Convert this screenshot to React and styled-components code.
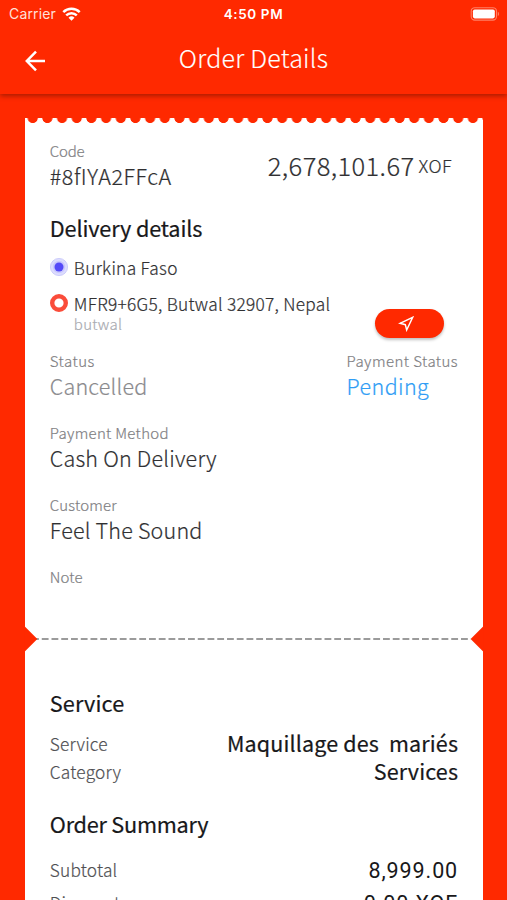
import React from 'react'
import styled, { createGlobalStyle } from 'styled-components'

const red = '#ff2900';

const GlobalStyle = createGlobalStyle`
*{box-sizing:border-box;}
html,body{
margin:0;
height:100%;
overflow:hidden;
background-color:${red};
}
`;

const Screen = styled.div`
width:507px;
height:900px;
overflow:hidden;
background-color:${red};
font-family:"Noto Sans CJK SC","Noto Sans",sans-serif;
font-weight:300;
color:#303032;
white-space:pre;
-webkit-text-stroke:0.2px currentColor;
`;

const Header = styled.header`
height:94px;
color:white;
-webkit-text-stroke:0;
box-shadow:0 2px 5px rgba(0,0,0,0.34);
`;
const StatusBar = styled.div`
height:28px;
padding:0 7px 0 9px;
display:grid;
grid-template-columns:1fr auto 1fr;
align-items:center;
font-family:Inter,sans-serif;
font-size:14px;
line-height:28px;
`;
const Carrier = styled.div`
display:flex;
align-items:center;
gap:6px;
font-weight:400;
letter-spacing:0.15px;
color:#ffe0d9;
`;
const Time = styled.div`
margin-right:2px;
font-weight:600;
font-size:13.5px;
letter-spacing:0.6px;
`;
const BatteryBox = styled.div`
display:flex;
justify-content:flex-end;
`;
const AppBar = styled.div`
height:62px;
padding:4px 24px 0;
display:grid;
grid-template-columns:24px 1fr 24px;
align-items:center;
`;
const Title = styled.h1`
margin:0 0 8px;
font-size:25px;
font-weight:300;
line-height:36px;
letter-spacing:0.25px;
text-align:center;
-webkit-text-stroke:0.15px currentColor;
`;

const Ticket = styled.main`
margin:24px 24.4px 0 25.3px;
height:820px;
background-color:white;
`;
// row of punched half circles along the top edge
const Scallops = styled.div`
height:6px;
margin-bottom:18px;
background-image:radial-gradient(circle at 50% 0, ${red} 4.7px, transparent 5.4px);
background-size:14.68px 6px;
background-position:0.4px 0;
background-repeat:repeat-x;
`;
const Section = styled.section`
padding:${p => p.$top || 0}px 24.5px 0;
height:${p => p.$h}px;
`;
const Between = styled.div`
display:flex;
justify-content:space-between;
align-items:flex-start;
margin-bottom:${p => p.$gap || 0}px;
`;
const Field = styled.div`
margin-bottom:24px;
`;
const Label = styled.div`
margin-bottom:2px;
font-size:15px;
line-height:18px;
letter-spacing:${p => p.$ls || 0.3}px;
color:#7e7e82;
`;
const Value = styled.div`
font-size:21.5px;
line-height:28px;
letter-spacing:${p => p.$ls || 0.2}px;
color:${p => p.$color || 'inherit'};
`;
const Heading = styled.h2`
margin:0 0 ${p => p.$gap}px;
font-size:21.7px;
font-weight:400;
line-height:28px;
letter-spacing:${p => p.$ls || -0.15}px;
color:#18181a;
`;
const Amount = styled.div`
display:flex;
align-items:center;
margin:4px 6px 0 0;
font-size:25.5px;
line-height:36px;
letter-spacing:0.4px;
`;
const Currency = styled.span`
font-size:18px;
margin:1px 0 0 4px;
letter-spacing:0.5px;
`;

const Place = styled.div`
display:flex;
gap:6px;
margin-bottom:${p => p.$gap || 0}px;
`;
const PlaceMark = styled.svg`
width:18px;
height:18px;
margin-top:2px;
flex:none;
`;
const PlaceName = styled.div`
font-size:17.3px;
line-height:23px;
letter-spacing:0.28px;
`;
const PlaceNote = styled(Label)`
color:#a9abb1;
`;
const RouteButton = styled.button`
width:69px;
height:29px;
margin:17px 14.5px 0 0;
padding:0 6px 0 0;
border:none;
border-radius:15px;
background-color:${red};
box-shadow:0 2px 3px rgba(0,0,0,0.25);
display:flex;
align-items:center;
justify-content:center;
`;

const Tear = styled.div`
height:24px;
margin:0 -1px;
display:flex;
align-items:center;
`;
const Notch = styled.div`
width:13px;
height:26px;
background-color:${red};
clip-path:${p => p.$right ? 'polygon(100% 0,100% 100%,0 50%)' : 'polygon(0 0,100% 50%,0 100%)'};
`;
const Dashes = styled.div`
flex:1;
height:2.4px;
margin-left:-6px;
background-image:linear-gradient(90deg,#9b9b9b 7px,transparent 7px);
background-size:9.75px 100%;
background-position:1px 0;
`;

const Line = styled.div`
display:flex;
justify-content:space-between;
height:28px;
line-height:28px;
margin-bottom:${p => p.$gap || 0}px;
`;
const LineName = styled.span`
margin-top:1px;
font-size:17.3px;
letter-spacing:0.2px;
color:#505053;
`;
const LineValue = styled.span`
font-size:21.5px;
font-weight:400;
letter-spacing:0.15px;
color:#18181a;
`;
const Price = styled(LineValue)`
font-family:Roboto,sans-serif;
font-size:21.5px;
line-height:32px;
letter-spacing:0.9px;
-webkit-text-stroke:0;
`;

const WifiIcon = () => (
  <svg width="19" height="14" viewBox="0 0 19 14" fill="none" stroke="white" strokeWidth="2.5">
    <path d="M1.3 5.2a11.7 11.7 0 0 1 16.4 0" />
    <path d="M4.2 8.4a7.6 7.6 0 0 1 10.6 0" />
    <path d="M9.5 13.8L6.5 10.8a4.3 4.3 0 0 1 6 0z" fill="white" stroke="none" />
  </svg>
)

const BatteryIcon = () => (
  <svg width="30" height="14" viewBox="0 0 30 14">
    <rect x="1.2" y="0.7" width="25.3" height="12.4" rx="3.6" fill="none" stroke="#ff8066" strokeWidth="1.1" />
    <rect x="2.9" y="2.4" width="21.9" height="9" rx="1.8" fill="white" />
    <path d="M27.8 4.8a2.4 2.4 0 0 1 0 4.2z" fill="#ff8066" />
  </svg>
)

const BackIcon = () => (
  <svg width="22" height="22" viewBox="0 0 22 22" fill="none" stroke="white" strokeWidth="2.5">
    <path d="M21 11H3M12 1.6L2.8 11l9.2 9.4" />
  </svg>
)

const App = () => {
  return (
    <Screen>
      <GlobalStyle />
      <Header>
        <StatusBar>
          <Carrier>Carrier<WifiIcon /></Carrier>
          <Time>4:50 PM</Time>
          <BatteryBox><BatteryIcon /></BatteryBox>
        </StatusBar>
        <AppBar>
          <BackIcon />
          <Title>Order Details</Title>
        </AppBar>
      </Header>
      <Ticket>
        <Scallops />
        <Section $h={485}>
          <Between>
            <Field>
              <Label $ls={-0.2}>Code</Label>
              <Value $ls={0.55}>#8fIYA2FFcA</Value>
            </Field>
            <Amount>2,678,101.67<Currency>XOF</Currency></Amount>
          </Between>
          <Heading $gap={14}>Delivery details</Heading>
          <Place $gap={13}>
            <PlaceMark viewBox="0 0 18 18">
              <circle cx="9" cy="9" r="8.6" fill="#dcdcfd" stroke="#c4c4fa" strokeWidth="0.8" />
              <circle cx="9" cy="9" r="6.2" fill="#c9c8fc" />
              <circle cx="9" cy="9" r="4.5" fill="#5449f8" />
            </PlaceMark>
            <PlaceName>Burkina Faso</PlaceName>
          </Place>
          <Between $gap={14}>
            <Place>
              <PlaceMark viewBox="0 0 18 18">
                <circle cx="9" cy="9" r="6.8" fill="white" stroke="#fa4c3a" strokeWidth="4.4" />
              </PlaceMark>
              <div>
                <PlaceName>MFR9+6G5, Butwal 32907, Nepal</PlaceName>
                <PlaceNote>butwal</PlaceNote>
              </div>
            </Place>
            <RouteButton aria-label="Open route">
              <svg width="16" height="16" viewBox="0 0 24 24" fill="none" stroke="white" strokeWidth="2.2">
                <path d="M3 11L22 2l-9 19-2-8z" />
              </svg>
            </RouteButton>
          </Between>
          <Between>
            <Field>
              <Label $ls={0.45}>Status</Label>
              <Value $color="#8a8a8d">Cancelled</Value>
            </Field>
            <Field>
              <Label $ls={0.45}>Payment Status</Label>
              <Value $color="#2f9df5" $ls={0.4}>Pending</Value>
            </Field>
          </Between>
          <Field>
            <Label>Payment Method</Label>
            <Value>Cash On Delivery</Value>
          </Field>
          <Field>
            <Label $ls={0.2}>Customer</Label>
            <Value>Feel The Sound</Value>
          </Field>
          <Label $ls={0.1}>Note</Label>
        </Section>
        <Tear>
          <Notch />
          <Dashes />
          <Notch $right />
        </Tear>
        <Section $h={300} $top={38}>
          <Heading $gap={12} $ls={0.1}>Service</Heading>
          <Line><LineName>Service</LineName><LineValue>{'Maquillage des  mariés'}</LineValue></Line>
          <Line $gap={25}><LineName>Category</LineName><LineValue>Services</LineValue></Line>
          <Heading $gap={17} $ls={-0.25}>Order Summary</Heading>
          <Line $gap={4.5}><LineName>Subtotal</LineName><Price>8,999.00</Price></Line>
          <Line><LineName>Discount</LineName><Price>0.00 XOF</Price></Line>
        </Section>
      </Ticket>
    </Screen>
  )
}

export default App
